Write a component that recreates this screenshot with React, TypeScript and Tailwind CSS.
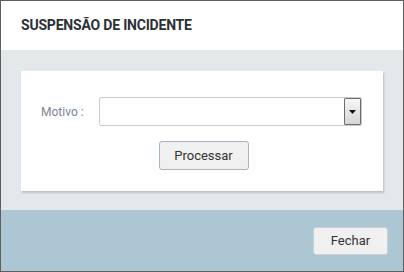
export default function App() {
  return (
    <div className="w-[404px] h-[272px] border border-[#5e5e5e] flex flex-col bg-white font-['Roboto',sans-serif]">
      {/* Cabeçalho */}
      <div className="h-[49px] shrink-0 flex items-center pl-5 bg-white">
        <h2 className="text-[14px] font-bold text-[#2b2f36] tracking-[-0.2px]">SUSPENSÃO DE INCIDENTE</h2>
      </div>

      {/* Corpo */}
      <div className="bg-[#e3e8eb] pt-[21px] pb-[19px] px-5">
        <div className="bg-white h-[120px] shadow-[1px_2px_2px_rgba(0,0,0,0.18)] pt-[26px] pl-5 pr-[21px]">
          <div className="flex items-center">
            <label className="w-[58px] text-[12px] text-[#7a8594]">Motivo :</label>
            <div className="flex-1 h-[29px] flex border border-[#c8cbcf] rounded-[2px] bg-white">
              <div className="flex-1" />
              <div className="w-[17px] h-full border border-[#6d6d6d] rounded-[1px] bg-gradient-to-b from-[#f7f7f7] to-[#d6d6d6] flex items-center justify-center">
                <svg width="7" height="4" viewBox="0 0 7 4">
                  <path d="M0 0H7L3.5 4Z" fill="#111" />
                </svg>
              </div>
            </div>
          </div>
          <div className="flex justify-center mt-[15px] pl-[4px]">
            <button className="w-[90px] h-[29px] bg-[#f0f0f0] border border-[#a7b4c2] rounded-[3px] text-[13px] text-[#333]">
              Processar
            </button>
          </div>
        </div>
      </div>

      {/* Rodapé */}
      <div className="flex-1 bg-[#adc6d3] flex justify-end items-start pt-[17px] pr-[15px]">
        <button className="w-[75px] h-[28px] bg-[#f0f0f0] border border-[#c9d0d6] rounded-[3px] text-[13px] text-[#333]">
          Fechar
        </button>
      </div>
    </div>
  );
}
